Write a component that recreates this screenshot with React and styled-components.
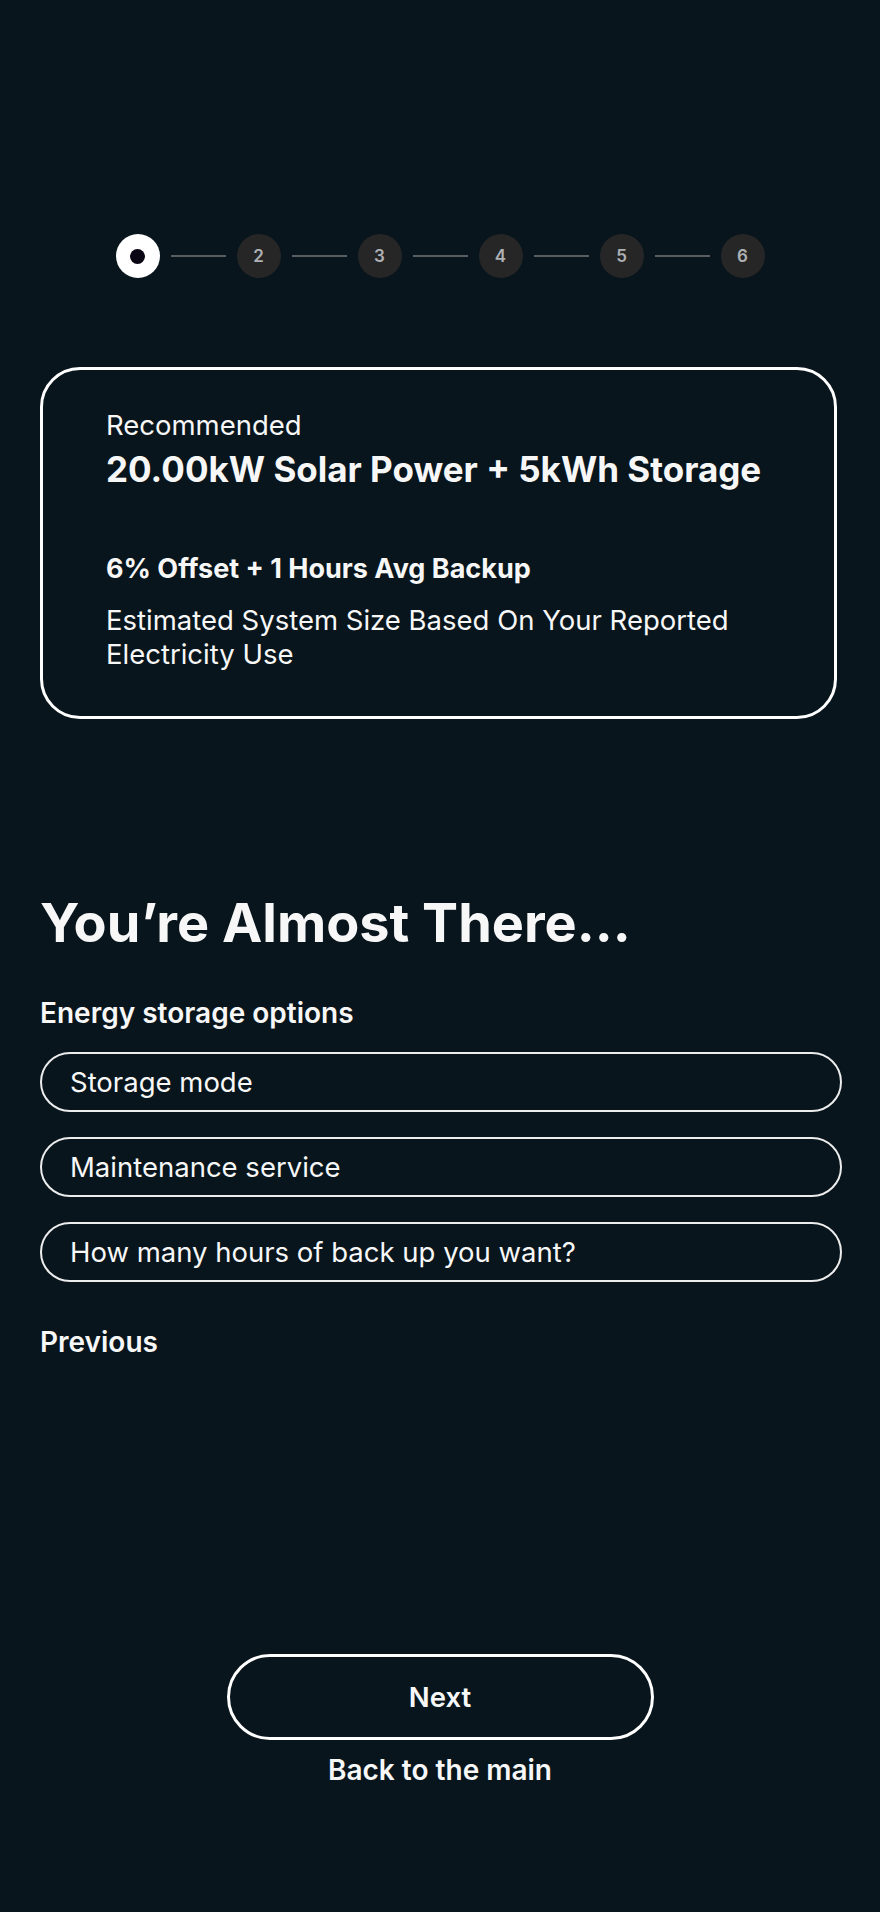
import styled, { createGlobalStyle } from "styled-components";

const GlobalStyle = createGlobalStyle`
  html, body {
    margin: 0;
    padding: 0;
    background: #08151c;
  }
  body {
    font-family: Inter, "Noto Sans", Roboto, sans-serif;
    color: #f7f7f7;
  }
`;

const Page = styled.div`
  min-height: 1912px;
  box-sizing: border-box;
  padding: 234px 40px 0;
  display: flex;
  flex-direction: column;
`;

const Stepper = styled.div`
  display: flex;
  align-items: center;
  justify-content: center;
  gap: 11px;
`;

const Step = styled.div`
  width: 44px;
  height: 44px;
  border-radius: 50%;
  display: flex;
  align-items: center;
  justify-content: center;
  background: ${(p) => (p.active ? "#ffffff" : "#262626")};
  color: #aeb1b4;
  font-size: 17px;
  font-weight: 600;
`;

const Dot = styled.span`
  width: 15px;
  height: 15px;
  border-radius: 50%;
  background: #0b0614;
`;

const Connector = styled.span`
  width: 55px;
  height: 2px;
  background: #5a5d60;
`;

const Card = styled.section`
  margin: 89px 3px 0 0;
  border: 3px solid #ffffff;
  border-radius: 40px;
  padding: 39px 50px 45px 63px;
  display: flex;
  flex-direction: column;
`;

const Eyebrow = styled.div`
  font-size: 27.5px;
  line-height: 32px;
  font-weight: 400;
`;

const PlanTitle = styled.h2`
  margin: 8px 0 0;
  font-size: 35px;
  line-height: 40px;
  font-weight: 700;
`;

const PlanMeta = styled.div`
  margin-top: 65px;
  font-size: 27px;
  line-height: 30px;
  font-weight: 700;
`;

const PlanNote = styled.p`
  margin: 19px 0 0;
  font-size: 27.5px;
  line-height: 34px;
  font-weight: 400;
`;

const Heading = styled.h1`
  margin: 172px 0 0;
  font-size: 54px;
  line-height: 64px;
  font-weight: 700;
`;

const Label = styled.div`
  margin-top: 42px;
  font-size: 28px;
  line-height: 32px;
  font-weight: 600;
`;

const Fields = styled.div`
  margin: 23px -2px 0 0;
  display: flex;
  flex-direction: column;
  gap: 25px;
`;

const Field = styled.div`
  height: 60px;
  box-sizing: border-box;
  border: 2px solid #ececec;
  border-radius: 30px;
  padding: 0 28px;
  display: flex;
  align-items: center;
  font-size: 27.5px;
  font-weight: 400;
`;

const TextLink = styled.a`
  display: block;
  font-size: 28px;
  line-height: 32px;
  font-weight: 600;
  color: #f7f7f7;
  text-decoration: none;
  cursor: pointer;
`;

const PrevLink = styled(TextLink)`
  margin-top: 44px;
  align-self: flex-start;
`;

const Actions = styled.div`
  margin-top: 296px;
  display: flex;
  flex-direction: column;
  align-items: center;
  gap: 14px;
`;

const NextButton = styled.button`
  width: 427px;
  height: 86px;
  border: 3px solid #ffffff;
  border-radius: 43px;
  background: transparent;
  color: #f7f7f7;
  font-family: inherit;
  font-size: 27.5px;
  font-weight: 600;
  cursor: pointer;
`;

const steps = [1, 2, 3, 4, 5, 6];
const fields = [
  "Storage mode",
  "Maintenance service",
  "How many hours of back up you want?",
];

export default function App() {
  const current = 1;

  return (
    <>
      <GlobalStyle />
      <Page>
        <Stepper>
          {steps.map((n, i) => [
            i > 0 && <Connector key={`c${n}`} />,
            <Step key={n} active={n === current}>
              {n === current ? <Dot /> : n}
            </Step>,
          ])}
        </Stepper>

        <Card>
          <Eyebrow>Recommended</Eyebrow>
          <PlanTitle>20.00kW Solar Power + 5kWh Storage</PlanTitle>
          <PlanMeta>6% Offset + 1 Hours Avg Backup</PlanMeta>
          <PlanNote>
            Estimated System Size Based On Your Reported Electricity Use
          </PlanNote>
        </Card>

        <Heading>You’re Almost There...</Heading>
        <Label>Energy storage options</Label>
        <Fields>
          {fields.map((f) => (
            <Field key={f}>{f}</Field>
          ))}
        </Fields>
        <PrevLink>Previous</PrevLink>

        <Actions>
          <NextButton>Next</NextButton>
          <TextLink>Back to the main</TextLink>
        </Actions>
      </Page>
    </>
  );
}
